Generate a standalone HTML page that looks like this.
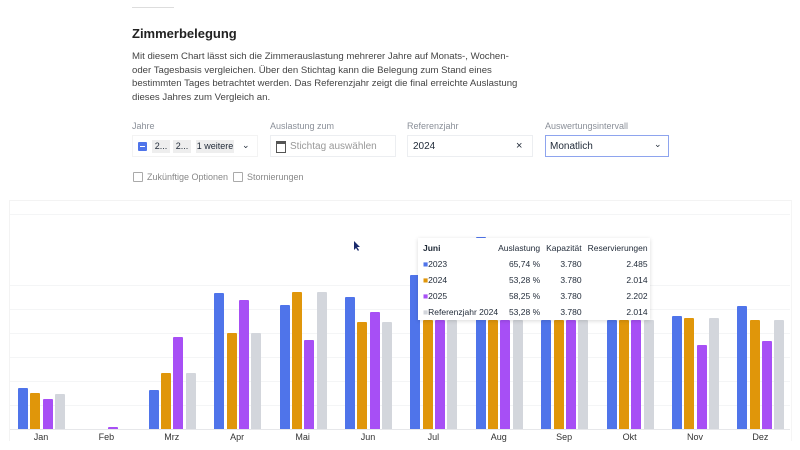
<!DOCTYPE html><html><head><meta charset="utf-8"><style>
body{margin:0;width:800px;height:450px;background:#fff;font-family:"Liberation Sans",sans-serif;color:#1f2937;position:relative;overflow:hidden}
.a{position:absolute}
.lbl{font-size:9px;color:#8a8f98}
.inp{border:1px solid #eceef1;height:22px;top:135px;font-size:10px;color:#333;box-sizing:border-box}
.bar{position:absolute;width:10px;border-radius:1px 1px 0 0}
.b{background:#4f74ea}.o{background:#e0960a}.p{background:#a74ff5}.g{background:#d3d6dc}
.grid{position:absolute;left:10px;width:780px;height:1px;background:#f4f5f6}
.ml{position:absolute;top:432px;font-size:9px;color:#333;width:40px;text-align:center}
table{border-collapse:collapse;font-size:8.5px;white-space:nowrap}
td{padding:0;height:16px}
</style></head><body>
<div class="a" style="left:132px;top:7px;width:42px;height:1px;background:#ddd"></div>
<div class="a" style="left:132px;top:26px;font-size:13px;font-weight:bold;color:#222">Zimmerbelegung</div>
<div class="a" style="left:132px;top:50px;width:400px;font-size:9.6px;line-height:13.5px;color:#444">Mit diesem Chart lässt sich die Zimmerauslastung mehrerer Jahre auf Monats-, Wochen-<br>oder Tagesbasis vergleichen. Über den Stichtag kann die Belegung zum Stand eines<br>bestimmten Tages betrachtet werden. Das Referenzjahr zeigt die final erreichte Auslastung<br>dieses Jahres zum Vergleich an.</div>
<div class="a lbl" style="left:132px;top:121px">Jahre</div>
<div class="a lbl" style="left:270px;top:121px">Auslastung zum</div>
<div class="a lbl" style="left:407px;top:121px">Referenzjahr</div>
<div class="a lbl" style="left:545px;top:121px">Auswertungsintervall</div>
<div class="a inp" style="left:132px;width:126px;border-color:#f3f3f3"></div>
<div class="a" style="left:138px;top:142px;width:9px;height:9px;background:#4f74ea;border-radius:1px"><div style="margin:4px 2px;height:1px;background:#fff"></div></div>
<div class="a" style="left:152px;top:140px;width:18px;height:13px;background:#eee;font-size:9px;line-height:13px;text-align:center">2...</div>
<div class="a" style="left:173px;top:140px;width:18px;height:13px;background:#eee;font-size:9px;line-height:13px;text-align:center">2...</div>
<div class="a" style="left:196px;top:140px;width:38px;height:13px;background:#eee;font-size:9px;line-height:13px;text-align:center">1 weitere</div>
<div class="a" style="left:242px;top:140px;font-size:9px">⌄</div>
<div class="a inp" style="left:270px;width:126px"></div>
<div class="a" style="left:276px;top:141px;width:8px;height:8px;border:1.5px solid #555;border-top-width:3px"></div>
<div class="a" style="left:290px;top:141px;font-size:10px;color:#999">Stichtag auswählen</div>
<div class="a inp" style="left:407px;width:126px"></div>
<div class="a" style="left:413px;top:141px;font-size:10px">2024</div>
<div class="a" style="left:516px;top:140px;font-size:11px">×</div>
<div class="a inp" style="left:545px;width:124px;border:1px solid #8ea4ee"></div>
<div class="a" style="left:550px;top:141px;font-size:10px">Monatlich</div>
<div class="a" style="left:654px;top:139px;font-size:9px">⌄</div>
<div class="a" style="left:133px;top:172px;width:8px;height:8px;border:1px solid #aaa;border-radius:1px"></div>
<div class="a lbl" style="left:147px;top:172px;color:#888">Zukünftige Optionen</div>
<div class="a" style="left:233px;top:172px;width:8px;height:8px;border:1px solid #aaa;border-radius:1px"></div>
<div class="a lbl" style="left:247px;top:172px;color:#888">Stornierungen</div>
<div class="a" style="left:9px;top:200px;width:781px;height:240px;border-left:1px solid #f3f3f3;border-top:1px solid #f3f3f3;border-right:1px solid #f5f5f5"></div>
<div class="grid" style="top:214px"></div><div class="grid" style="top:285px"></div><div class="grid" style="top:309px"></div><div class="grid" style="top:333px"></div><div class="grid" style="top:357px"></div><div class="grid" style="top:381px"></div><div class="grid" style="top:405px"></div><div class="grid" style="top:429px;background:#e6e7ea"></div>
<div id="bars"></div>
<script>
var d=[[388,393,399,394],[null,null,427,null],[390,373,337,373],[293,333,300,333],[305,292,340,292],[297,322,312,322],[275,320,320,320],[237,320,320,320],[320,320,320,320],[320,320,320,320],[316,318,345,318],[306,320,341,320]];
var m=["Jan","Feb","Mrz","Apr","Mai","Jun","Jul","Aug","Sep","Okt","Nov","Dez"],c=["b","o","p","g"],h="";
for(var i=0;i<12;i++){var x=18+i*65.4;for(var j=0;j<4;j++){var t=d[i][j];if(t!=null)h+='<div class="bar '+c[j]+'" style="left:'+(x+j*12.3)+'px;top:'+t+'px;height:'+(429-t)+'px"></div>';}
h+='<div class="ml" style="left:'+(x+23-20)+'px">'+m[i]+'</div>';}
document.getElementById("bars").innerHTML=h;
</script>
<div class="a" style="left:418px;top:238px;width:232px;height:82px;background:#fff;box-shadow:0 1px 4px rgba(0,0,0,.15)">
<table style="margin:2px 0 0 5px;width:222px">
<tr><td style="font-weight:bold">Juni</td><td style="text-align:right">Auslastung</td><td style="text-align:right;padding-left:6px">Kapazität</td><td style="text-align:right;padding-left:6px">Reservierungen</td></tr>
<tr><td><span style="color:#4f74ea">■</span>2023</td><td style="text-align:right">65,74 %</td><td style="text-align:right">3.780</td><td style="text-align:right">2.485</td></tr>
<tr><td><span style="color:#e0960a">■</span>2024</td><td style="text-align:right">53,28 %</td><td style="text-align:right">3.780</td><td style="text-align:right">2.014</td></tr>
<tr><td><span style="color:#a74ff5">■</span>2025</td><td style="text-align:right">58,25 %</td><td style="text-align:right">3.780</td><td style="text-align:right">2.202</td></tr>
<tr><td><span style="color:#d3d6dc">■</span>Referenzjahr 2024</td><td style="text-align:right">53,28 %</td><td style="text-align:right">3.780</td><td style="text-align:right">2.014</td></tr>
</table></div>
<svg class="a" style="left:353px;top:241px" width="8" height="11"><path d="M1 0L1 9L3 7L5 10L6 9L4 6L7 6Z" fill="#1a2a6c"/></svg>
</body></html>
